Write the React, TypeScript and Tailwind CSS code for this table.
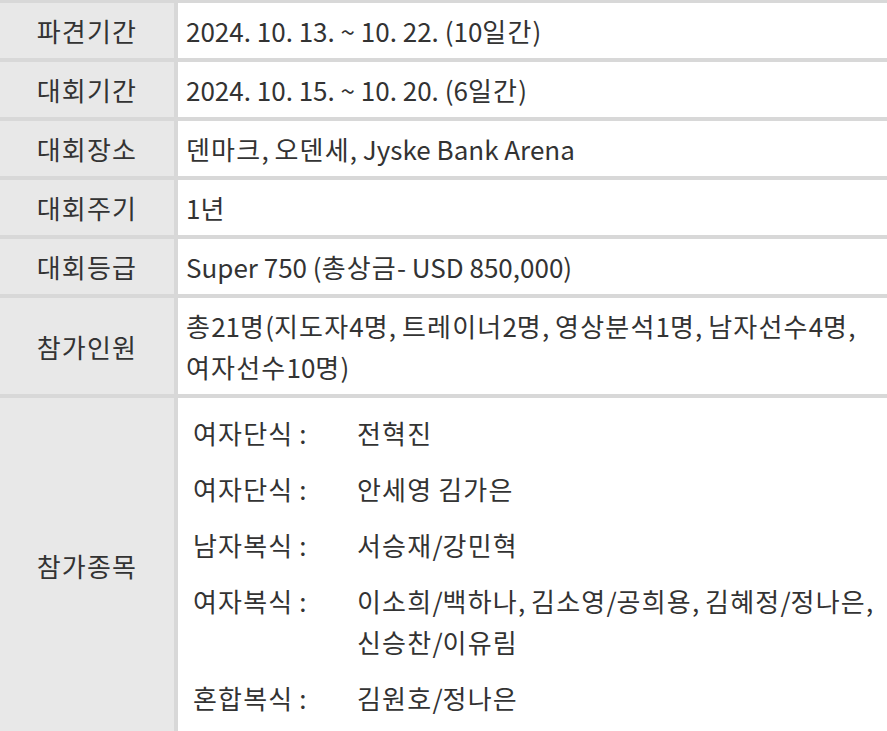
import React from "react";

function K({ t }: { t: string }) {
  const parts = t.split(/([\uAC00-\uD7A3]+)/);
  return (
    <>
      {parts.map((p, i) =>
        /[\uAC00-\uD7A3]/.test(p) ? (
          <span key={i} className="tracking-[1.2px]">
            {p}
          </span>
        ) : (
          <React.Fragment key={i}>{p}</React.Fragment>
        )
      )}
    </>
  );
}

const rows: { label: string; value: string }[] = [
  { label: "파견기간", value: "2024. 10. 13. ~ 10. 22. (10일간)" },
  { label: "대회기간", value: "2024. 10. 15. ~ 10. 20. (6일간)" },
  { label: "대회장소", value: "덴마크, 오덴세, Jyske Bank Arena" },
  { label: "대회주기", value: "1년" },
  { label: "대회등급", value: "Super 750 (총상금- USD 850,000)" },
  {
    label: "참가인원",
    value: "총21명(지도자4명, 트레이너2명, 영상분석1명, 남자선수4명, 여자선수10명)",
  },
];

const events: [string, string][] = [
  ["여자단식", "전혁진"],
  ["여자단식", "안세영 김가은"],
  ["남자복식", "서승재/강민혁"],
  ["여자복식", "이소희/백하나, 김소영/공희용, 김혜정/정나은, 신승찬/이유림"],
  ["혼합복식", "김원호/정나은"],
];

export default function App() {
  return (
    <div
      className="w-[887px] h-[731px] overflow-hidden bg-white text-[#333333]"
      style={{ fontFamily: '"Noto Sans CJK KR", "Noto Sans", sans-serif' }}
    >
      <div className="grid grid-cols-[174px_1fr] gap-[4px] bg-[#d8d8d8] pt-[3px] text-[26px] leading-[41px] break-keep">
        {rows.map((r) => (
          <React.Fragment key={r.label}>
            <div className="bg-[#e8e8e8] flex items-center justify-center py-[7px]">
              <K t={r.label} />
            </div>
            <div className="bg-white px-[8px] py-[7px] flex items-center">
              <div>
                <K t={r.value} />
              </div>
            </div>
          </React.Fragment>
        ))}
        <div className="bg-[#e8e8e8] flex items-center justify-center">
          <K t="참가종목" />
        </div>
        <div className="bg-white pl-[15px] pr-[8px] pt-[14px] pb-[15px] flex flex-col gap-[15px]">
          {events.map(([k, v], i) => (
            <div key={i} className="flex">
              <div className="w-[164px] shrink-0">
                <K t={k} /> :
              </div>
              <div className="flex-1">
                <K t={v} />
              </div>
            </div>
          ))}
        </div>
      </div>
    </div>
  );
}
